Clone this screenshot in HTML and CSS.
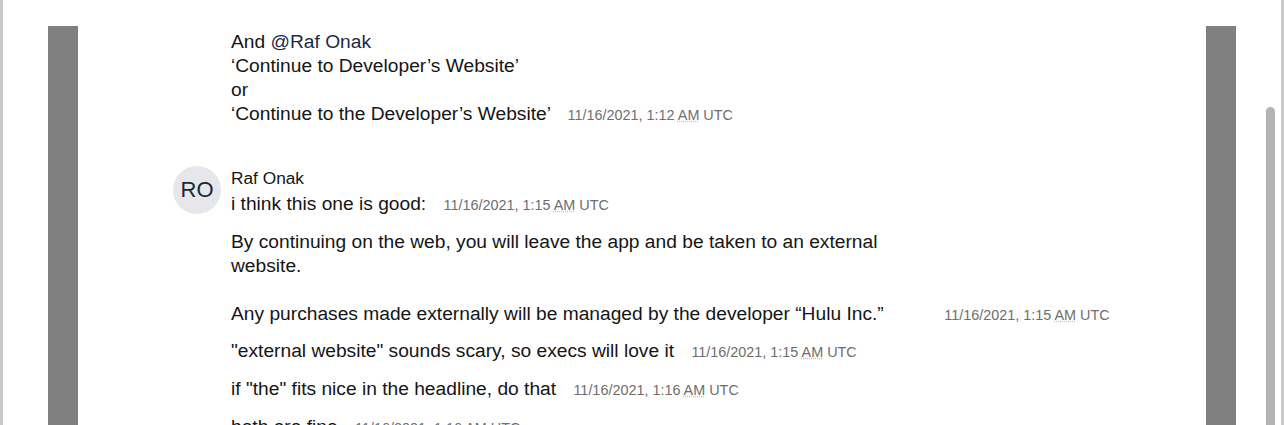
FILE: index.html
```html
<!DOCTYPE html>
<html lang="en">
<head>
    <meta charset="UTF-8">
    <title>Thread</title>
    <link rel="stylesheet" href="styles.css">
</head>
<body>
    <div class="window">
        <div class="side-bar"></div>
        <div class="thread">
            <div class="msg msg-cont">
                And <span class="mention">@Raf Onak</span><br>
                ‘Continue to Developer’s Website’<br>
                or<br>
                ‘Continue to the Developer’s Website’ <span class="time">11/16/2021, 1:12 <abbr>AM</abbr> UTC</span>
            </div>

            <div class="group">
                <div class="avatar">RO</div>
                <div class="group-body">
                    <div class="author">Raf Onak</div>
                    <div class="msg">i think this one is good: <span class="time">11/16/2021, 1:15 <abbr>AM</abbr> UTC</span></div>
                    <div class="msg msg-quote">
                        <div class="quote">By continuing on the web, you will leave the app and be taken to an external website.<br><br>Any purchases made externally will be managed by the developer “Hulu Inc.”</div>
                        <span class="time">11/16/2021, 1:15 <abbr>AM</abbr> UTC</span>
                    </div>
                    <div class="msg">"external website" sounds scary, so execs will love it <span class="time">11/16/2021, 1:15 <abbr>AM</abbr> UTC</span></div>
                    <div class="msg">if "the" fits nice in the headline, do that <span class="time">11/16/2021, 1:16 <abbr>AM</abbr> UTC</span></div>
                    <div class="msg">both are fine <span class="time">11/16/2021, 1:16 <abbr>AM</abbr> UTC</span></div>
                </div>
            </div>
        </div>
        <div class="side-bar"></div>
        <div class="scroll-thumb"></div>
    </div>
</body>
</html>
```

FILE: styles.css
```css
html, body {
    margin: 0;
    height: 100%;
    background: #fff;
}
body {
    font-family: "Liberation Sans", Arial, sans-serif;
    color: #151515;
    font-size: 19.2px;
    line-height: 24px;
    overflow: hidden;
}
.window {
    position: relative;
    height: 100%;
    box-sizing: border-box;
    border-left: 3px solid #c8c8c8;
    border-right: 3px solid #c8c8c8;
    padding: 26px 45px 0 45px;
    display: flex;
    overflow: hidden;
}
.side-bar {
    width: 30px;
    flex-shrink: 0;
    background: #808080;
}
.thread {
    flex: 1;
    padding-top: 4px;
}
.msg {
    margin-bottom: 14px;
}
.msg-cont {
    padding-left: 153px;
}
.msg-quote {
    margin-bottom: 13px;
}
.mention {
    color: #1b2a47;
}
.time {
    font-size: 14.4px;
    line-height: 16px;
    color: #6e6e6e;
    margin-left: 12px;
}
.time abbr {
    text-decoration: underline dotted #c4c4c4;
}
.group {
    display: flex;
    gap: 10px;
    margin-top: 40px;
    padding-left: 95px;
}
.avatar {
    width: 48px;
    height: 48px;
    border-radius: 50%;
    background: #e5e7eb;
    color: #1f2633;
    font-size: 22px;
    display: flex;
    align-items: center;
    justify-content: center;
    flex-shrink: 0;
}
.author {
    font-size: 17.3px;
    line-height: 20px;
    margin-top: 2px;
    margin-bottom: 4px;
}
.quote {
    display: inline-block;
    width: 696px;
}
.scroll-thumb {
    position: absolute;
    right: 6px;
    top: 107px;
    bottom: 0;
    width: 9px;
    border-radius: 5px 5px 0 0;
    background: #b3b3b3;
}
```
